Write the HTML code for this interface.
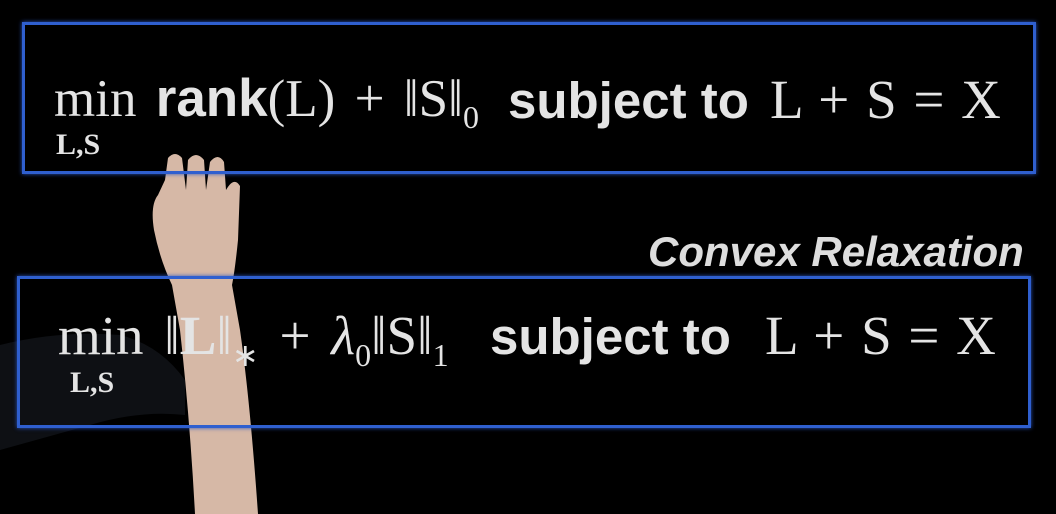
<!DOCTYPE html>
<html><head><style>
body{margin:0;width:1056px;height:514px;background:#000;overflow:hidden;position:relative;font-family:"Liberation Serif",serif;color:#e4e4e4}
.box{position:absolute;border:3px solid #2f5fcf;box-shadow:0 0 4px #2a55c0}
.t{position:absolute;white-space:nowrap;font-size:53px;line-height:1}
.sans{font-family:"Liberation Sans",sans-serif;font-weight:bold}
.sub{position:absolute;font-size:30px;font-weight:bold}
.s{font-size:32px;vertical-align:-12px}
</style></head><body>
<svg width="1056" height="514" style="position:absolute;left:0;top:0">
<path d="M0 345 Q60 330 120 335 Q160 345 185 380 L185 415 Q140 410 90 425 L0 450Z" fill="#0e1014"/>
<path d="M168 158 Q175 150 182 158 L186 190 L188 160 Q196 150 204 160 L206 190 L210 162 Q218 152 224 162 L226 190 Q234 176 240 186 L238 240 Q235 270 232 285 L240 330 Q250 400 258 514 L195 514 Q190 420 180 330 L172 285 Q160 260 154 230 Q150 205 158 195 L165 180Z" fill="#d6b8a6"/>
</svg>
<div class="box" style="left:22px;top:22px;width:1008px;height:146px"></div>
<div class="box" style="left:17px;top:276px;width:1008px;height:146px"></div>
<div class="t" style="left:54px;top:72px;word-spacing:6px">min <span class="sans">rank</span>(L) + ‖S‖<span class="s">0</span></div>
<div class="sub" style="left:56px;top:128px">L,S</div>
<div class="t sans" style="left:508px;top:75px;font-size:51px">subject to</div>
<div class="t" style="left:770px;top:72px;font-size:55px;word-spacing:3px">L + S = X</div>
<div class="t sans" style="left:648px;top:231px;font-size:42px;font-style:italic;color:#ddd">Convex Relaxation</div>
<div class="t" style="left:58px;top:308px;font-size:55px;word-spacing:7px">min ‖<b>L</b>‖<span class="s">∗</span> + <i>λ</i><span class="s">0</span>‖S‖<span class="s">1</span></div>
<div class="sub" style="left:70px;top:366px">L,S</div>
<div class="t sans" style="left:490px;top:311px;font-size:51px">subject to</div>
<div class="t" style="left:765px;top:308px;font-size:55px;word-spacing:3px">L + S = X</div>
</body></html>
